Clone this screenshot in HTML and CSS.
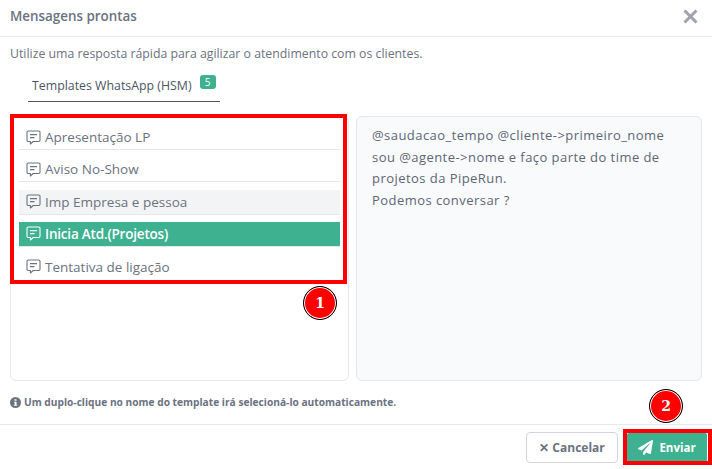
FILE: index.html
```html
<!DOCTYPE html>
<html lang="pt-BR">
<head>
<meta charset="utf-8">
<title>Mensagens prontas</title>
<link rel="stylesheet" href="styles.css">
</head>
<body>
<svg class="sprite" width="0" height="0" aria-hidden="true">
  <symbol id="msg" viewBox="0 0 15 15">
    <path d="M2.2 1h10.6c.7 0 1.2.5 1.2 1.2v8.1c0 .7-.5 1.2-1.2 1.2H7.2L4.4 14v-2.5H2.2c-.7 0-1.2-.5-1.2-1.2V2.200c0-.7.5-1.200 1.200-1.200z" fill="none" stroke="currentColor" stroke-width="1.100" stroke-linejoin="round"/>
    <path d="M4 4.600h7M4 7.600h4.500" fill="none" stroke="currentColor" stroke-width="1.100"/>
  </symbol>
</svg>
<div class="modal">
  <header class="head">
    <h1 class="title">Mensagens prontas</h1>
    <svg class="close" width="15" height="15" viewBox="0 0 15 15"><path d="M1.500 1.500l12 12M13.500 1.500l-12 12" stroke="currentColor" stroke-width="3" fill="none"/></svg>
  </header>
  <main class="body">
    <p class="intro">Utilize uma resposta rápida para agilizar o atendimento com os clientes.</p>
    <nav class="tabs">
      <div class="tab">Templates WhatsApp (HSM)<span class="badge">5</span></div>
    </nav>
    <div class="panels">
      <ul class="list">
        <li class="item"><svg class="ico"><use href="#msg"/></svg>Apresentação LP</li>
        <li class="item"><svg class="ico"><use href="#msg"/></svg>Aviso No-Show</li>
        <li class="item hover"><svg class="ico"><use href="#msg"/></svg>Imp Empresa e pessoa</li>
        <li class="item active"><svg class="ico"><use href="#msg"/></svg>Inicia Atd.(Projetos)</li>
        <li class="item last"><svg class="ico"><use href="#msg"/></svg>Tentativa de ligação</li>
      </ul>
      <div class="preview">
        <p>@saudacao_tempo @cliente-&gt;primeiro_nome</p>
        <p>sou @agente-&gt;nome e faço parte do time de</p>
        <p>projetos da PipeRun.</p>
        <p>Podemos conversar ?</p>
      </div>
    </div>
    <p class="note">
      <svg class="info" width="11" height="11" viewBox="0 0 11 11"><circle cx="5.500" cy="5.500" r="5.500" fill="currentColor"/><path d="M4.500 2.300h2v1.500h-2zM4.300 4.700h2.200v3h.7v1H3.900v-1h.8v-2h-.4z" fill="#fff"/></svg>
      Um duplo-clique no nome do template irá selecioná-lo automaticamente.
    </p>
  </main>
  <footer class="foot">
    <button class="btn cancel">✕ Cancelar</button>
    <button class="btn send">
      <svg width="15" height="15" viewBox="0 0 512 512"><path fill="currentColor" d="M476 3.200L12.500 270.600c-18.100 10.400-15.800 35.600 2.200 43.200L121 358.400l287.300-253.200c5.500-4.900 13.300 2.600 8.600 8.300L176 407v80.500c0 23.600 28.500 32.900 42.500 15.800L282 426l124.600 52.200c14.200 6 30.400-2.900 33-18.200l72-432C515 7.800 493.300-6.800 476 3.200z"/></svg>
      Enviar
    </button>
  </footer>
  <div class="mark mark-list"></div>
  <div class="mark mark-send"></div>
  <div class="num num-1">1</div>
  <div class="num num-2">2</div>
</div>
</body>
</html>
```
FILE: styles.css
```css
* { box-sizing: border-box; }
html, body { margin: 0; padding: 0; }
body {
  width: 712px;
  height: 469px;
  overflow: hidden;
  background: #fff;
  font-family: "Open Sans", "Noto Sans", sans-serif;
  color: #6b7280;
}
.sprite { position: absolute; }
.modal { position: relative; width: 712px; height: 469px; display: flex; flex-direction: column; }
.head {
  height: 37px;
  flex: none;
  display: flex;
  align-items: center;
  justify-content: space-between;
  padding: 0 14px 5px 10px;
  border-bottom: 1px solid #e9eaec;
}
.title { margin: 0; font-size: 13.400px; font-weight: 600; color: #6b7280; }
.close { color: #9ca3af; margin-top: 2px; }
.body { flex: 1; padding: 0 10px; display: flex; flex-direction: column; }
.intro { margin: 9px 0 0; font-size: 12.300px; line-height: 16px; font-weight: 500; color: #6b7280; }
.tabs { margin: 0 0 0 18px; height: 40px; display: flex; }
.tab {
  width: 192px;
  height: 40px;
  padding: 16px 0 0 4px;
  font-size: 12.350px;
  line-height: 16px;
  font-weight: 500;
  color: #4b5563;
  border-bottom: 1px solid #4b5563;
  white-space: nowrap;
  display: flex;
  align-items: flex-start;
}
.badge {
  margin: -3px 0 0 8px;
  width: 16px;
  height: 14px;
  border-radius: 3px;
  background: #3eb190;
  color: #fff;
  font-size: 10px;
  line-height: 14px;
  text-align: center;
}
.panels { margin-top: 14px; height: 265px; display: flex; gap: 7px; }
.list {
  list-style: none;
  margin: 0;
  width: 339px;
  padding: 8px 8px 0;
  border: 1px solid #e5e7eb;
  border-radius: 6px;
}
.item {
  height: 25px;
  margin-bottom: 7.250px;
  padding-left: 7px;
  display: flex;
  align-items: center;
  gap: 4px;
  font-size: 13.500px;
  color: #6b7280;
  border-bottom: 1px solid #e5e7eb;
  white-space: nowrap;
}
.item.last { border-bottom: 0; }
.item.hover { background: #f3f4f6; }
.item.active { background: #3eb190; color: #fff; font-weight: 600; letter-spacing: -.2px; }
.ico { width: 15px; height: 15px; flex: none; }
.preview {
  width: 346px;
  padding: 8px 15px;
  background: #f9fafb;
  border: 1px solid #e5e7eb;
  border-radius: 6px;
  font-size: 13px;
  letter-spacing: .45px;
  line-height: 21.700px;
  color: #5d6675;
}
.preview p { margin: 0; white-space: nowrap; }
.note {
  margin: 14px 0 0;
  display: flex;
  align-items: center;
  gap: 3px;
  font-size: 10.200px;
  line-height: 14px;
  font-weight: 700;
  color: #6b7280;
}
.info { flex: none; }
.foot {
  height: 45px;
  flex: none;
  border-top: 1px solid #e9eaec;
  display: flex;
  justify-content: flex-end;
  align-items: flex-start;
  gap: 9px;
  padding: 7px 5px 0 0;
}
.btn { font-family: inherit; font-size: 12px; font-weight: 700; display: flex; align-items: center; justify-content: center; }
.cancel { width: 92px; height: 31px; background: #fff; border: 1px solid #d1d5db; color: #6b7280; border-radius: 4px; }
.send { width: 80px; height: 29px; margin-top: 1px; background: #3eb190; border: 0; color: #fff; gap: 6px; border-radius: 2px; font-size: 11.500px; }
.mark { position: absolute; border: 4px solid #f00; }
.mark-list { left: 10px; top: 114px; width: 337px; height: 170px; }
.mark-send { left: 623px; top: 429px; width: 89px; height: 36px; }
.num {
  position: absolute;
  width: 34px;
  height: 34px;
  border-radius: 50%;
  background: #f00;
  border: 1px solid #000;
  box-shadow: inset 0 0 0 1px #fff;
  color: #fff;
  font-family: "DejaVu Serif", "Liberation Serif", serif;
  font-weight: 700;
  font-size: 14px;
  line-height: 32px;
  text-align: center;
}
.num-1 { left: 303px; top: 286px; }
.num-2 { left: 649px; top: 389px; }
```
